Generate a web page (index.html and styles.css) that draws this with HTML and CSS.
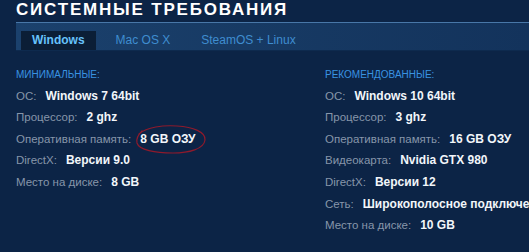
FILE: index.html
```html
<!DOCTYPE html>
<html lang="ru">
<head>
<meta charset="utf-8">
<title>Системные требования</title>
<link rel="stylesheet" href="styles.css">
</head>
<body>
<div class="page">
  <h2 class="title">СИСТЕМНЫЕ ТРЕБОВАНИЯ</h2>
  <div class="tabs">
    <div class="tab active">Windows</div>
    <div class="tab">Mac OS X</div>
    <div class="tab">SteamOS + Linux</div>
  </div>
  <div class="reqs">
    <div class="col">
      <div class="head">МИНИМАЛЬНЫЕ:</div>
      <div class="row"><span class="lbl">ОС:</span><span class="val">Windows 7 64bit</span></div>
      <div class="row"><span class="lbl">Процессор:</span><span class="val">2 ghz</span></div>
      <div class="row"><span class="lbl">Оперативная память:</span><span class="val mark">8 GB ОЗУ<svg class="circle" viewBox="0 0 78 35" width="78" height="35"><path d="M6 12 C 14 5, 30 3, 44 4 C 60 5, 73 10, 72 18 C 71 27, 56 31, 40 31 C 22 31, 6 28, 4 21 C 3 17, 5 13, 9 9" fill="none" stroke="#8e1a2c" stroke-width="1.2" stroke-linecap="round"/></svg></span></div>
      <div class="row"><span class="lbl">DirectX:</span><span class="val">Версии 9.0</span></div>
      <div class="row"><span class="lbl">Место на диске:</span><span class="val">8 GB</span></div>
    </div>
    <div class="col">
      <div class="head">РЕКОМЕНДОВАННЫЕ:</div>
      <div class="row"><span class="lbl">ОС:</span><span class="val">Windows 10 64bit</span></div>
      <div class="row"><span class="lbl">Процессор:</span><span class="val">3 ghz</span></div>
      <div class="row"><span class="lbl">Оперативная память:</span><span class="val">16 GB ОЗУ</span></div>
      <div class="row"><span class="lbl">Видеокарта:</span><span class="val">Nvidia GTX 980</span></div>
      <div class="row"><span class="lbl">DirectX:</span><span class="val">Версии 12</span></div>
      <div class="row"><span class="lbl">Сеть:</span><span class="val">Широкополосное подключение</span></div>
      <div class="row"><span class="lbl">Место на диске:</span><span class="val">10 GB</span></div>
    </div>
  </div>
</div>
</body>
</html>
```
FILE: styles.css
```css
html, body {
  margin: 0;
  padding: 0;
  width: 529px;
  height: 252px;
  overflow: hidden;
}
body {
  background: #0c2446;
  font-family: "Liberation Sans", Arial, sans-serif;
}
.page {
  padding-left: 16px;
}
.title {
  margin: 0;
  font-size: 17px;
  line-height: 20px;
  font-weight: bold;
  letter-spacing: 1.8px;
  color: #ffffff;
  white-space: nowrap;
  padding-bottom: 2px;
}
.tabs {
  display: flex;
  gap: 9px;
  border-top: 1px solid #4877a8;
  height: 29px;
  box-sizing: border-box;
  padding: 8px 0 0 5px;
  background: linear-gradient(to right, #1b416d 0%, #173a64 45%, #13335c 100%);
  border-bottom: 1px solid #0e2a4e;
}
.tab {
  height: 19px;
  line-height: 19px;
  padding: 0 11px;
  font-size: 12px;
  color: #3f8dd0;
  white-space: nowrap;
}
.tab.active {
  background: #0b1e36;
  color: #67c2fb;
  font-weight: bold;
}
.reqs {
  display: grid;
  grid-template-columns: 309px 1fr;
  padding-top: 13px;
}
.col {
  white-space: nowrap;
}
.head {
  font-size: 10px;
  line-height: 21.6px;
  color: #3a93e2;
}
.row {
  line-height: 21.6px;
  font-size: 12px;
}
.lbl {
  color: #8796aa;
  font-size: 11.5px;
  margin-right: 9px;
}
.val {
  color: #f2f6fa;
  font-weight: bold;
}
.mark {
  position: relative;
}
.circle {
  position: absolute;
  left: -7px;
  top: -10px;
  overflow: visible;
}
```
